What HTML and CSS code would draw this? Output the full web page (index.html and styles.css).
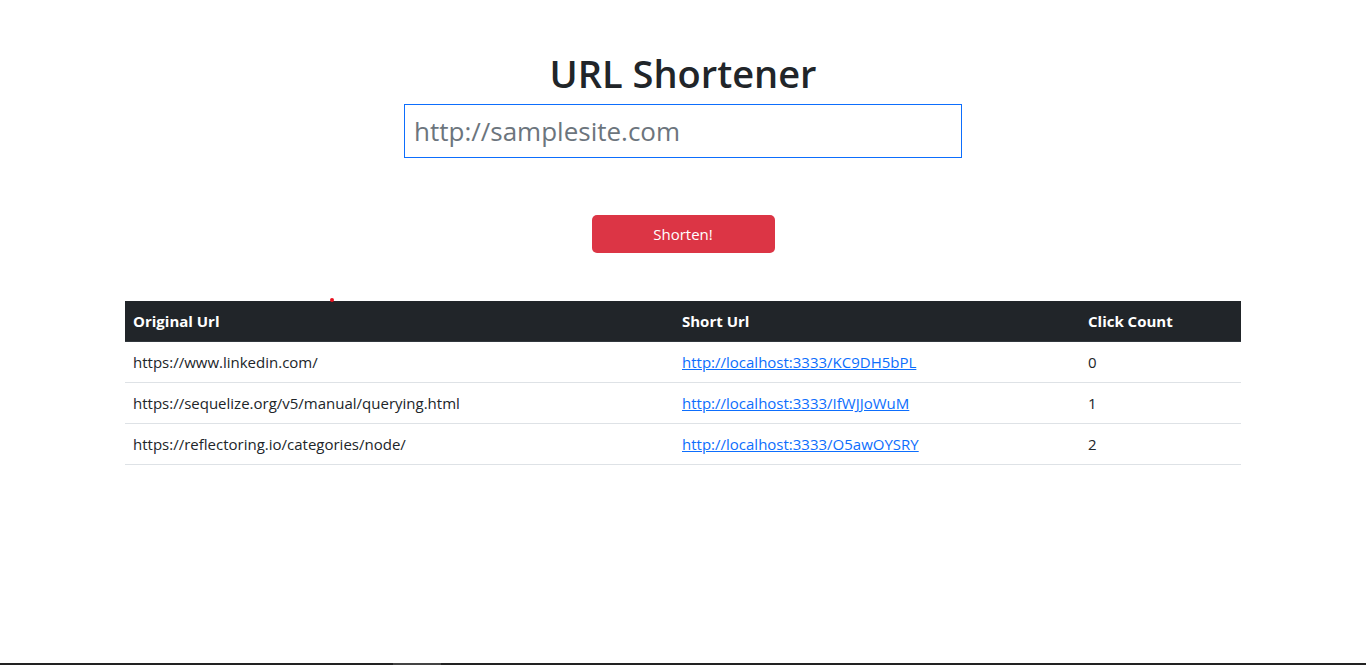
FILE: index.html
```html
<!DOCTYPE html>
<html lang="en">
<head>
<meta charset="utf-8">
<title>URL Shortener</title>
<link rel="stylesheet" href="styles.css">
</head>
<body>
<main class="page">
  <h1 class="title">URL Shortener</h1>
  <form class="shorten-form">
    <input class="url-input" type="text" placeholder="http://samplesite.com">
    <button class="btn-shorten" type="button">Shorten!</button>
  </form>
  <div class="table-wrap">
    <span class="dot"></span>
    <table class="url-table">
      <thead>
        <tr>
          <th class="col-orig">Original Url</th>
          <th class="col-short">Short Url</th>
          <th class="col-count">Click Count</th>
        </tr>
      </thead>
      <tbody>
        <tr>
          <td>https://www.linkedin.com/</td>
          <td><a href="#">http://localhost:3333/KC9DH5bPL</a></td>
          <td>0</td>
        </tr>
        <tr>
          <td>https://sequelize.org/v5/manual/querying.html</td>
          <td><a href="#">http://localhost:3333/IfWJJoWuM</a></td>
          <td>1</td>
        </tr>
        <tr>
          <td>https://reflectoring.io/categories/node/</td>
          <td><a href="#">http://localhost:3333/O5awOYSRY</a></td>
          <td>2</td>
        </tr>
      </tbody>
    </table>
  </div>
</main>
<div class="bottom-bar"><span class="bar-thumb"></span></div>
</body>
</html>
```
FILE: styles.css
```css
* { box-sizing: border-box; }
html, body {
  margin: 0;
  padding: 0;
  background: #fff;
  color: #212529;
  font-family: "Open Sans", "Noto Sans", "Liberation Sans", sans-serif;
  font-size: 15px;
  line-height: 24px;
}
.page {
  display: flex;
  flex-direction: column;
  align-items: center;
  padding-top: 49px;
}
.title {
  margin: 0 0 7px;
  font-size: 38px;
  line-height: 48px;
  font-weight: 600;
  color: #212529;
}
.shorten-form {
  display: flex;
  flex-direction: column;
  align-items: center;
}
.url-input {
  width: 558px;
  height: 54px;
  border: 1px solid #0d6efd;
  border-radius: 0;
  padding: 0 9px;
  font-family: inherit;
  font-size: 26px;
  color: #212529;
  outline: none;
}
.url-input::placeholder { color: #6c757d; opacity: 1; }
.btn-shorten {
  margin-top: 57px;
  width: 183px;
  height: 38px;
  border: none;
  border-radius: 5px;
  background: #dc3545;
  color: #fff;
  font-family: inherit;
  font-size: 15px;
  line-height: 24px;
}
.table-wrap {
  position: relative;
  margin-top: 48px;
  width: 1116px;
}
.dot {
  position: absolute;
  left: 205px;
  top: -3px;
  width: 4px;
  height: 4px;
  border-radius: 50%;
  background: #e8111f;
}
.url-table {
  width: 100%;
  border-collapse: collapse;
  table-layout: fixed;
}
.url-table th {
  background: #212529;
  color: #fff;
  font-weight: 700;
  text-align: left;
  padding: 8px;
  border-bottom: 1px solid #32383e;
}
.url-table td {
  padding: 8px;
  border-bottom: 1px solid #dee2e6;
}
.col-orig { width: 549px; }
.col-short { width: 406px; }
.col-count { width: 161px; }
.url-table a { color: #0d6efd; text-decoration: underline; }
.bottom-bar {
  position: fixed;
  left: 0;
  right: 0;
  bottom: 0;
  height: 2px;
  background: #222;
}
.bar-thumb {
  position: absolute;
  left: 393px;
  top: 0;
  width: 48px;
  height: 2px;
  background: #444;
}
```
